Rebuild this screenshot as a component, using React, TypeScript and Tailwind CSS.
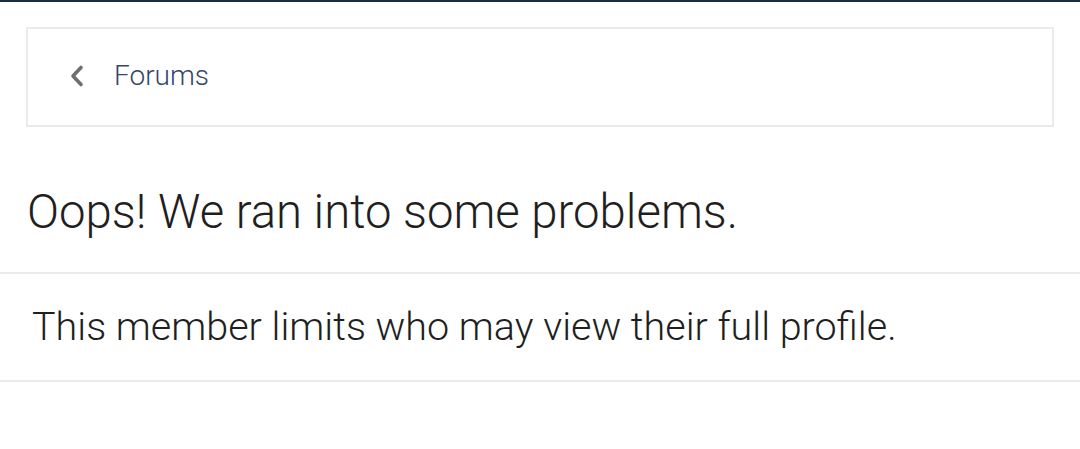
export default function App() {
  return (
    <div className="min-h-[449px] bg-white" style={{ fontFamily: 'Roboto, "Noto Sans", sans-serif' }}>
      <div className="h-[2px] bg-[#1b2a41]" />
      <div className="px-[26px] pt-[25px]">
        <a href="#" className="flex h-[100px] items-center border-2 border-[#ebebeb] pl-[40px]">
          <svg width="18" height="24" viewBox="0 0 18 24" className="mr-[28px] -mt-[2px]">
            <path d="M13 3.5 L5 12 L13 20.5" fill="none" stroke="#6f6f6f" strokeWidth="3.6" strokeLinecap="round" strokeLinejoin="round" />
          </svg>
          <span className="-mt-[2px] text-[28px] font-light text-[#35466a]">Forums</span>
        </a>
      </div>
      <h1 className="px-[27px] pt-[54px] pb-[29px] text-[47.3px] font-light leading-[62px] text-[#1f1f1f]">
        Oops! We ran into some problems.
      </h1>
      <div className="border-y-2 border-[#ebebeb] px-[32px] pt-[29px] pb-[29px]">
        <p className="text-[39.5px] font-light leading-[48px] text-[#1f1f1f]">
          This member limits who may view their full profile.
        </p>
      </div>
    </div>
  );
}
